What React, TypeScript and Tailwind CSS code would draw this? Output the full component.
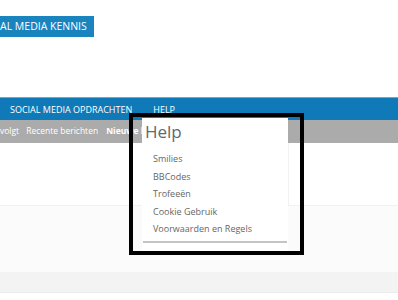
const helpLinks = ["Smilies", "BBCodes", "Trofeeën", "Cookie Gebruik", "Voorwaarden en Regels"];

export default function App() {
  return (
    <div
      className="relative h-[300px] w-[398px] overflow-hidden bg-white"
      style={{ fontFamily: '"Open Sans", "Noto Sans", sans-serif' }}
    >
      <header className="h-[97px] pt-[16px]">
        <div className="flex h-[21px] w-[94px] items-center bg-[#1a84bf] text-[10.5px] leading-none text-white">
          AL MEDIA KENNIS
        </div>
      </header>

      <nav className="flex h-[23px] items-center border-t border-[#5aaedb] bg-[#0f7ab7] text-[9px] uppercase leading-none text-white">
        <span className="ml-[10px]">Social Media Opdrachten</span>
        <span className="ml-[21px]">Help</span>
      </nav>

      <div className="flex h-[23px] bg-[#ababab] text-[8.5px] leading-none text-white">
        <div className="flex w-[142px] items-center overflow-hidden whitespace-nowrap">
          <span>volgt</span>
          <span className="ml-[7px]">Recente berichten</span>
          <span className="ml-[8px] font-bold">Nieuwe berichten</span>
        </div>
      </div>

      <div className="flex h-[62px]">
        <div className="flex-1" />
        <div className="w-[110px] border-l border-[#f2f2f2]" />
      </div>

      <div className="h-[67px] border-t border-[#f1f1f1] bg-[#fbfbfb]" />
      <div className="h-[20px] bg-[#f3f3f3]" />
      <div className="h-[6px] border-t border-[#ececec] bg-white" />

      <div className="absolute left-[142px] top-[118px] w-[146px] bg-white pb-[10px]">
        <div className="pl-[3px] pt-[3px] text-[17px] leading-[22px] text-[#5b6a74]">Help</div>
        <ul className="mt-[7px] pl-[11px] text-[9px] leading-[17.6px] text-[#666]">
          {helpLinks.map((l) => (
            <li key={l}>{l}</li>
          ))}
        </ul>
        <div className="mx-[1px] mt-[3px] h-[2px] bg-[#c4c4c4]" />
      </div>

      <div className="pointer-events-none absolute left-[129px] top-[113px] h-[142px] w-[175px] border-[4px] border-black" />
    </div>
  );
}
